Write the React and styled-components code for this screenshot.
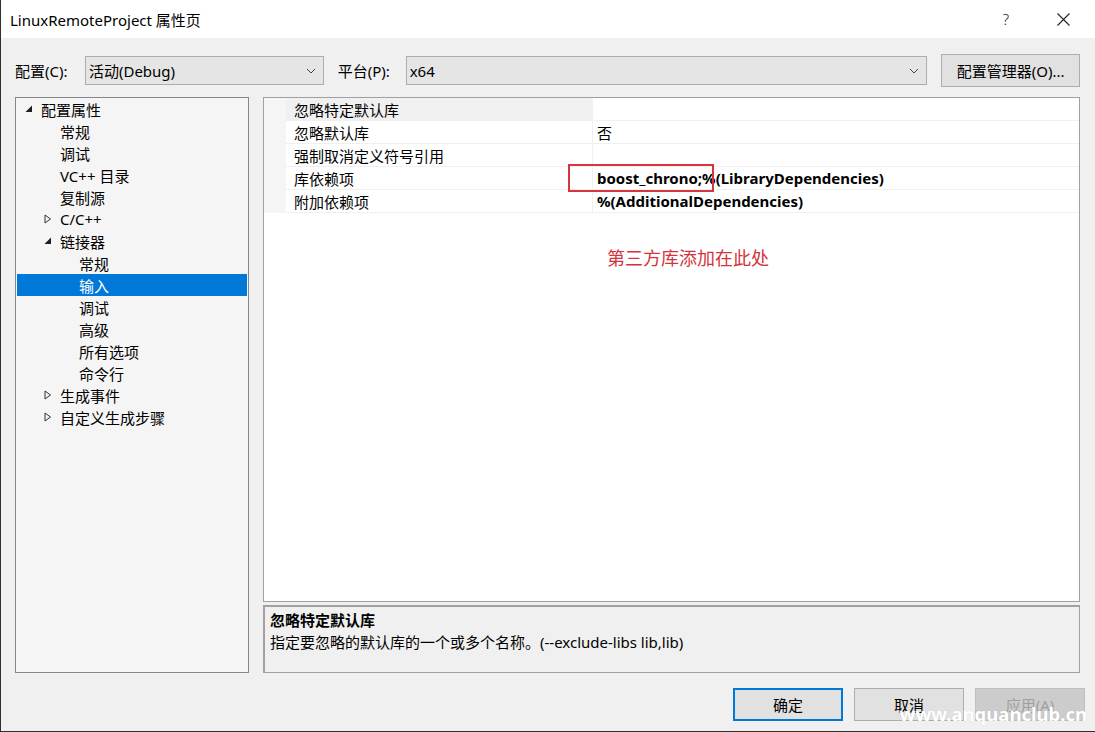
import React from 'react'
import styled, { createGlobalStyle } from 'styled-components'

const GlobalStyle = createGlobalStyle`
  html, body {
    margin: 0;
    padding: 0;
    background: #f0f0f0;
  }
  * {
    box-sizing: border-box;
  }
`

const FONT = `"Noto Sans", "Noto Sans CJK SC", sans-serif`

const Window = styled.div`
  position: relative;
  display: flex;
  flex-direction: column;
  width: 1095px;
  height: 732px;
  background: #f0f0f0;
  border-left: 1px solid #2f2f2f;
  border-bottom: 1px solid #2f2f2f;
  font-family: ${FONT};
  font-size: 15px;
  color: #000;
  overflow: hidden;
`
const TitleBar = styled.div`
  display: flex;
  align-items: center;
  height: 38px;
  padding: 0 9px 0 9px;
  background: #fff;
`
const Title = styled.span`
  flex: 1;
  font-size: 15px;
`
const TitleButton = styled.div`
  display: flex;
  align-items: center;
  justify-content: center;
  width: ${(p) => p.width}px;
  height: 38px;
  font-size: 15px;
  font-weight: 300;
  color: #222;
`
const Body = styled.div`
  flex: 1;
  display: flex;
  flex-direction: column;
  padding: 16px 15px 0 14px;
`
const ConfigRow = styled.div`
  display: flex;
  align-items: center;
  height: 33px;
`
const Label = styled.span`
  width: ${(p) => p.width}px;
`
const Combo = styled.div`
  display: flex;
  align-items: center;
  justify-content: space-between;
  width: ${(p) => p.width}px;
  height: 29px;
  margin-right: ${(p) => p.gap}px;
  padding: 0 7px 0 3px;
  background: #e5e5e5;
  border: 1px solid #adadad;
`
const Button = styled.div`
  display: flex;
  align-items: center;
  justify-content: center;
  width: ${(p) => p.width || 110}px;
  height: 33px;
  background: ${(p) => (p.disabled ? '#cccccc' : '#e1e1e1')};
  border: ${(p) => (p.primary ? '2px solid #0078d7' : '1px solid #adadad')};
  color: ${(p) => (p.disabled ? '#a0a0a0' : '#000')};
  border-color: ${(p) => (p.disabled ? '#bfbfbf' : undefined)};
`
const Main = styled.div`
  display: flex;
  gap: 14px;
  margin-top: 10px;
  height: 576px;
`
const Tree = styled.div`
  width: 234px;
  padding: 0 1px;
  background: #f5f5f5;
  border: 1px solid #828790;
`
const TreeRow = styled.div`
  display: flex;
  align-items: center;
  height: 22px;
  padding-left: ${(p) => 8 + (p.level - 1) * 19}px;
  background: ${(p) => (p.selected ? '#0078d7' : 'transparent')};
  color: ${(p) => (p.selected ? '#fff' : '#000')};
`
const Arrow = styled.span`
  display: flex;
  align-items: center;
  width: 16px;
  height: 22px;
`
const RightColumn = styled.div`
  flex: 1;
  display: flex;
  flex-direction: column;
  gap: 3px;
`
const Grid = styled.div`
  position: relative;
  flex: 1;
  background: #fff;
  border: 1px solid #a0a0a0;
`
const GridRow = styled.div`
  display: grid;
  grid-template-columns: 22px 307px 1fr;
  height: 23px;
`
const Gutter = styled.div`
  background: #f5f5f5;
`
const NameCell = styled.div`
  display: flex;
  align-items: center;
  padding-left: 8px;
  background: ${(p) => (p.active ? '#f0f0f0' : '#fff')};
  border-bottom: 1px solid #f0f0f0;
  border-right: 1px solid #f0f0f0;
`
const ValueCell = styled.div`
  display: flex;
  align-items: center;
  padding-left: 4px;
  font-weight: ${(p) => (p.bold ? 700 : 400)};
  border-bottom: 1px solid #f0f0f0;
`
const Highlight = styled.div`
  position: absolute;
  left: 304px;
  top: 66px;
  width: 146px;
  height: 28px;
  border: 2px solid #d7343d;
`
const Note = styled.div`
  position: absolute;
  left: 343px;
  top: 146px;
  font-family: "Noto Sans CJK SC", sans-serif;
  font-size: 18px;
  color: #d3343c;
`
const Description = styled.div`
  height: 68px;
  padding: 2px 5px;
  background: #f0f0f0;
  border: 2px solid #a0a0a0;
  border-right-width: 1px;
  border-bottom-width: 1px;
  line-height: 22px;
`
const DescTitle = styled.div`
  font-weight: 700;
`
const Footer = styled.div`
  display: flex;
  justify-content: flex-end;
  gap: 11px;
  padding: 15px 10px 0 0;
  margin-right: -15px;
`
const Watermark = styled.div`
  position: absolute;
  right: 8px;
  bottom: 5px;
  font-family: "Noto Sans", sans-serif;
  font-size: 18.5px;
  font-weight: 700;
  color: #fff;
  text-shadow: 0 0 1px rgba(0, 0, 0, 0.15);
`

const Chevron = () => (
  <svg width="10" height="6" viewBox="0 0 10 6">
    <path d="M1 1 L5 5 L9 1" fill="none" stroke="#444" strokeWidth="1" />
  </svg>
)

const CloseIcon = () => (
  <svg width="13" height="13" viewBox="0 0 13 13">
    <path d="M0.5 0.5 L12.5 12.5 M12.5 0.5 L0.5 12.5" stroke="#222" strokeWidth="1.1" />
  </svg>
)

const Expanded = ({ color }) => (
  <svg width="8" height="8" viewBox="0 0 8 8">
    <polygon points="7,0.5 7,7 0.5,7" fill={color} />
  </svg>
)

const Collapsed = () => (
  <svg width="8" height="10" viewBox="0 0 8 10">
    <polygon points="1,1 6.5,5 1,9" fill="none" stroke="#333" strokeWidth="1" />
  </svg>
)

const treeItems = [
  { label: '配置属性', level: 1, state: 'open' },
  { label: '常规', level: 2 },
  { label: '调试', level: 2 },
  { label: 'VC++ 目录', level: 2 },
  { label: '复制源', level: 2 },
  { label: 'C/C++', level: 2, state: 'closed' },
  { label: '链接器', level: 2, state: 'open' },
  { label: '常规', level: 3 },
  { label: '输入', level: 3, selected: true },
  { label: '调试', level: 3 },
  { label: '高级', level: 3 },
  { label: '所有选项', level: 3 },
  { label: '命令行', level: 3 },
  { label: '生成事件', level: 2, state: 'closed' },
  { label: '自定义生成步骤', level: 2, state: 'closed' },
]

const properties = [
  { name: '忽略特定默认库', value: '', active: true },
  { name: '忽略默认库', value: '否' },
  { name: '强制取消定义符号引用', value: '' },
  { name: '库依赖项', value: 'boost_chrono;%(LibraryDependencies)', bold: true },
  { name: '附加依赖项', value: '%(AdditionalDependencies)', bold: true },
]

function App() {
  return (
    <Window>
      <GlobalStyle />
      <TitleBar>
        <Title>LinuxRemoteProject 属性页</Title>
        <TitleButton width={68}>?</TitleButton>
        <TitleButton width={46}>
          <CloseIcon />
        </TitleButton>
      </TitleBar>
      <Body>
        <ConfigRow>
          <Label width={70}>配置(C):</Label>
          <Combo width={239} gap={14}>
            <span>活动(Debug)</span>
            <Chevron />
          </Combo>
          <Label width={68}>平台(P):</Label>
          <Combo width={522} gap={14}>
            <span>x64</span>
            <Chevron />
          </Combo>
          <Button width={139}>配置管理器(O)...</Button>
        </ConfigRow>
        <Main>
          <Tree>
            {treeItems.map((item, i) => (
              <TreeRow key={i} level={item.level} selected={item.selected}>
                <Arrow>
                  {item.state === 'open' && <Expanded color="#1e1e1e" />}
                  {item.state === 'closed' && <Collapsed />}
                </Arrow>
                {item.label}
              </TreeRow>
            ))}
          </Tree>
          <RightColumn>
            <Grid>
              {properties.map((p, i) => (
                <GridRow key={i}>
                  <Gutter />
                  <NameCell active={p.active}>{p.name}</NameCell>
                  <ValueCell bold={p.bold}>{p.value}</ValueCell>
                </GridRow>
              ))}
              <Highlight />
              <Note>第三方库添加在此处</Note>
            </Grid>
            <Description>
              <DescTitle>忽略特定默认库</DescTitle>
              <div>指定要忽略的默认库的一个或多个名称。(--exclude-libs lib,lib)</div>
            </Description>
          </RightColumn>
        </Main>
        <Footer>
          <Button primary>确定</Button>
          <Button>取消</Button>
          <Button disabled>应用(A)</Button>
        </Footer>
      </Body>
      <Watermark>www.anquanclub.cn</Watermark>
    </Window>
  )
}

export default App
